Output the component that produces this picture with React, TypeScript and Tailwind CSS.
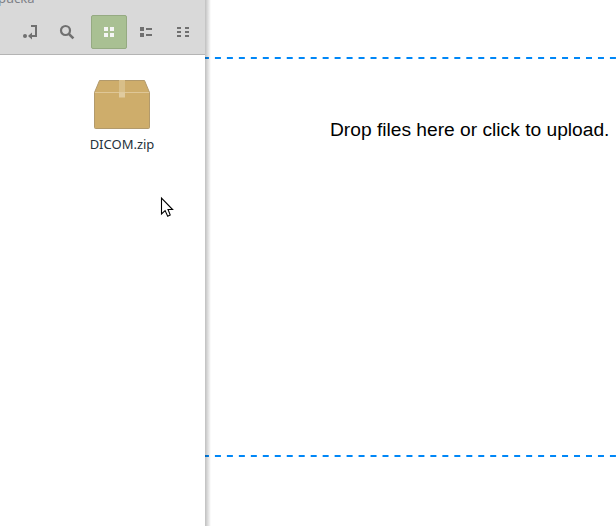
import React from "react";

function Toolbar() {
  return (
    <div className="relative h-[55px] w-[205px] shrink-0 overflow-hidden border-b border-[#b4b4b4] bg-[#d9d9d9]">
      <span className="absolute -top-[12px] -left-[2px] font-['Noto_Sans',sans-serif] text-[13px] leading-[20px] text-[#7d8087]">pučka</span>
      <div className="flex items-center pt-[15px] pl-[12px]">
        <div className="flex h-[34px] w-[36px] items-center justify-center">
          <svg width="16" height="16" viewBox="0 0 16 16" fill="none">
            <circle cx="3" cy="12" r="2" fill="#707070" />
            <path d="M9 2h5v10H8" stroke="#707070" strokeWidth="2" />
            <path d="M10 8.5v7L6 12z" fill="#707070" />
          </svg>
        </div>
        <div className="flex h-[34px] w-[38px] items-center justify-center">
          <svg width="16" height="16" viewBox="0 0 16 16" fill="none" stroke="#707070">
            <circle cx="6.5" cy="6.5" r="4.5" strokeWidth="2.2" />
            <path d="M9.8 9.8l4.6 4.6" strokeWidth="2.6" />
          </svg>
        </div>
        <div className="ml-[5px] flex h-[34px] w-[36px] items-center justify-center rounded-[2px] border border-[#95aa82] bg-[#a9c093]">
          <svg width="10" height="10" fill="#f5f5f5">
            <path d="M0 0h4v4H0zM6 0h4v4H6zM0 6h4v4H0zM6 6h4v4H6z" />
          </svg>
        </div>
        <svg className="ml-[13px]" width="12" height="10" fill="#707070">
          <path d="M0 0h4v4H0zM6 1h6v2H6zM0 6h4v4H0zM6 7h6v2H6z" />
        </svg>
        <svg className="ml-[25px]" width="12" height="10" fill="#707070">
          <path d="M0 0h4v2H0zM8 0h4v2H8zM0 4h4v2H0zM8 4h4v2H8zM0 8h4v2H0zM8 8h4v2H8z" />
        </svg>
      </div>
    </div>
  );
}

function ZipFile() {
  return (
    <div className="ml-[82px] mt-[24px] flex w-[80px] flex-col items-center">
      <svg width="58" height="51" viewBox="0 0 58 51">
        <path d="M6.5 1.5h45l5 12v35q0 1-1 1h-53q-1 0-1-1v-35z" fill="#cead6b" stroke="#b29a6c" />
        <path d="M2 13.5h54" stroke="#dfc797" />
        <path d="M26 1h6v12h-6z" fill="#d8bf89" />
        <path d="M26 13h6v6l-1-1-1 1-1-1-1 1-1-1-1 1z" fill="#e0cb9f" />
      </svg>
      <span className="mt-[4px] whitespace-nowrap font-['Noto_Sans',sans-serif] text-[13px] leading-[20px] text-[#26323c]">DICOM.zip</span>
    </div>
  );
}

function Dashes() {
  return (
    <svg className="block" width="411" height="2">
      <path d="M-2.05 1H411" stroke="#0087f7" strokeWidth="2" strokeDasharray="6 5.97" />
    </svg>
  );
}

export default function App() {
  return (
    <main className="relative flex h-[526px] w-[616px] overflow-hidden bg-white">
      <aside className="w-[205px] shrink-0">
        <Toolbar />
        <ZipFile />
      </aside>
      <section className="relative flex w-[411px] flex-col pt-[57px]">
        <Dashes />
        <p className="h-[396px] pt-[59px] pl-[125px] whitespace-nowrap font-['Liberation_Sans',Arial,sans-serif] text-[19.2px] leading-[24px] text-black">Drop files here or click to upload.</p>
        <Dashes />
        <div className="absolute top-0 left-0 h-full w-[6px] bg-linear-to-r from-black/25 to-transparent" />
      </section>
      <svg className="absolute left-[160px] top-[196px]" width="15" height="22" viewBox="0 0 15 22">
        <path d="M1.5 2v16l3.6-3.4 2.6 5.6 2.5-1.3L8 13.5h4.6z" fill="white" stroke="black" strokeWidth="1.1" />
      </svg>
    </main>
  );
}
